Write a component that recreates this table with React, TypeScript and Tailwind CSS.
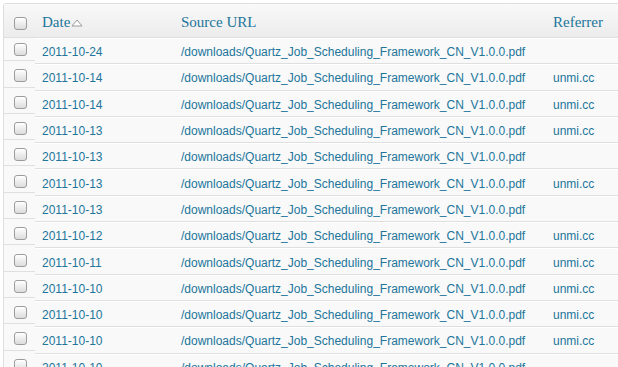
const rows = [
  { date: "2011-10-24", ref: "" },
  { date: "2011-10-14", ref: "unmi.cc" },
  { date: "2011-10-14", ref: "unmi.cc" },
  { date: "2011-10-13", ref: "unmi.cc" },
  { date: "2011-10-13", ref: "" },
  { date: "2011-10-13", ref: "unmi.cc" },
  { date: "2011-10-13", ref: "" },
  { date: "2011-10-12", ref: "unmi.cc" },
  { date: "2011-10-11", ref: "unmi.cc" },
  { date: "2011-10-10", ref: "unmi.cc" },
  { date: "2011-10-10", ref: "unmi.cc" },
  { date: "2011-10-10", ref: "unmi.cc" },
  { date: "2011-10-10", ref: "" },
];

const url = "/downloads/Quartz_Job_Scheduling_Framework_CN_V1.0.0.pdf";

function Check() {
  return (
    <span className="block w-[13px] h-[13px] rounded-[3px] border border-[#9c9c9c] bg-gradient-to-b from-white to-[#dcdcdc] shadow-[inset_0_1px_0_#fff]" />
  );
}

export default function App() {
  return (
    <div className="w-[618px] h-[367px] overflow-hidden bg-white pl-[3px] pt-[3px]">
      <div className="w-[660px] border-l border-t border-[#dfdfdf] rounded-tl-[3px] bg-[#f9f9f9] font-['Liberation_Sans',Arial,sans-serif] text-[12px] text-[#21759b]">
        {/* Header */}
        <div className="flex h-[34px] border-b border-[#dfdfdf] bg-gradient-to-b from-[#f9f9f9] to-[#ececec] font-['Liberation_Serif','Times_New_Roman',serif] text-[15px] text-[#21759b]">
          <div className="w-[31px] flex items-center justify-center pt-[5px] pl-[2px]">
            <Check />
          </div>
          <div className="w-[139px] flex items-center pl-[7px] pt-[3px]">
            <span>Date</span>
            <svg width="12" height="8" viewBox="0 0 12 8" className="ml-[1px] mt-[2px]">
              <path d="M6 1 L11 7 L1 7 Z" fill="#fff" stroke="#9a9a9a" strokeWidth="1" strokeLinejoin="round" />
            </svg>
          </div>
          <div className="w-[372px] flex items-center pl-[7px] pt-[3px]">Source URL</div>
          <div className="flex-1 flex items-center pl-[7px] pt-[3px]">Referrer</div>
        </div>

        {/* Rows */}
        {rows.map((r, i) => (
          <div key={i} className="flex h-[26.3px]">
            <div className="w-[31px] flex flex-col">
              <div className="h-[calc(100%-3px)] flex items-center justify-center pl-[2px] pt-[1px] border-b border-[#dfdfdf]">
                <Check />
              </div>
            </div>
            <div className="flex-1 flex border-t border-white border-b border-b-[#dfdfdf] pt-[2px]">
              <div className="w-[139px] flex items-center pl-[7px]">{r.date}</div>
              <div className="w-[372px] flex items-center pl-[7px]">{url}</div>
              <div className="flex-1 flex items-center pl-[7px]">{r.ref}</div>
            </div>
          </div>
        ))}
      </div>
    </div>
  );
}
